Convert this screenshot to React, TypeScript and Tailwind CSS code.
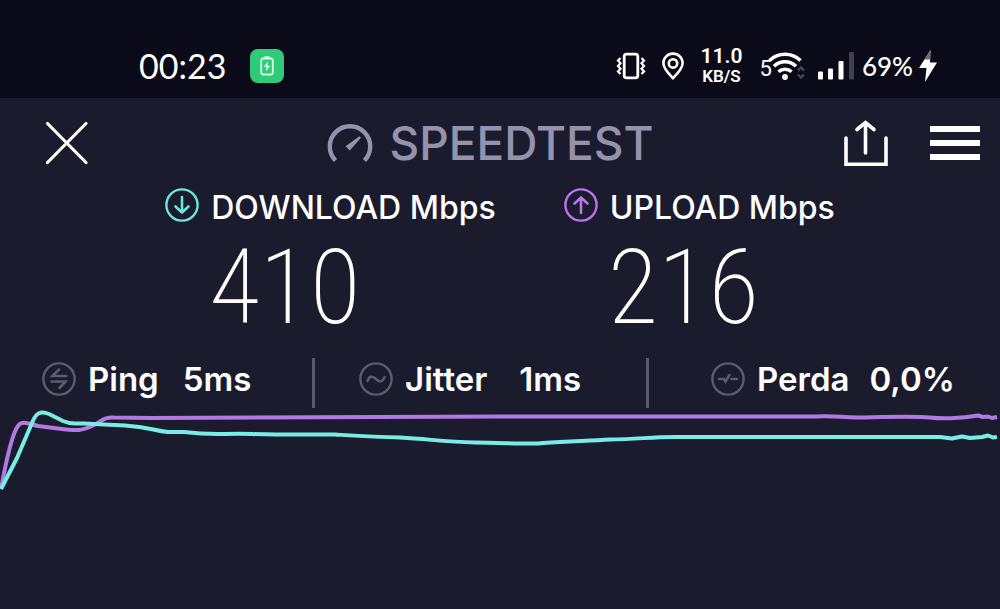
import type { ReactNode } from "react";

const VibrateIcon = () => (
  <svg viewBox="0 0 30 28" className="h-7 w-[30px]" fill="none" stroke="white" aria-hidden="true">
    <rect x="8.2" y="2.2" width="13.6" height="23.6" rx="2.4" strokeWidth="2.8" />
    <path d="M4.500 6 2 8.500l2.500 2.700L2 14l2.500 2.700L2 19.500 4.500 22" strokeWidth="2.200" />
    <path d="M25.500 6 28 8.500l-2.500 2.700L28 14l-2.500 2.700L28 19.500 25.500 22" strokeWidth="2.200" />
  </svg>
);

const PinIcon = () => (
  <svg viewBox="0 0 22 28" className="h-7 w-[22px]" fill="none" stroke="white" strokeWidth="2.6" aria-hidden="true">
    <path d="M11 26.200C6.500 21.500 1.400 16.500 1.400 11.200a9.600 9.600 0 0 1 19.200 0C20.600 16.500 15.500 21.500 11 26.200Z" />
    <circle cx="11" cy="11.400" r="4.200" />
  </svg>
);

const WifiIcon = () => (
  <svg viewBox="0 0 38 30" className="-ml-1 h-[30px] w-[38px]" fill="none" stroke="white" strokeWidth="3.6" aria-hidden="true">
    <path d="M1.500 9.500a22.500 22.500 0 0 1 31 0" />
    <path d="M6 15.200a16 16 0 0 1 22 0" />
    <path d="M10.500 20.800a9.500 9.500 0 0 1 13 0" />
    <circle cx="17" cy="26" r="2.900" fill="white" stroke="none" />
    <path d="m30 19.500 3-3 3 3M30 23.500l3 3 3-3" stroke="#45455a" strokeWidth="2.400" />
  </svg>
);

const SignalIcon = () => (
  <svg viewBox="0 0 36 28" className="h-7 w-9" fill="white" aria-hidden="true">
    <rect x="0" y="19.500" width="5" height="8" rx="1" />
    <rect x="10" y="16.500" width="5" height="11" rx="1" />
    <rect x="20.500" y="9" width="5" height="18.500" rx="1" />
    <rect x="31" y="0" width="5" height="27.500" rx="1" fill="#404054" />
  </svg>
);

const BoltIcon = () => (
  <svg viewBox="0 0 18 32" className="h-8 w-[18px]" aria-hidden="true">
    <path d="M11.500 0 0 18h7.500L6 32 18 12.500h-7Z" fill="white" />
    <path d="M11.500 0 5.500 9.500h5.300Z" fill="#6b6b7c" />
  </svg>
);

const StatusBar = () => (
  <div className="flex h-[98px] items-end justify-between bg-[#0a0a19] pr-[63px] pb-3 pl-[139px]">
    <div className="flex h-10 items-center gap-6">
      <span className="font-['Lato',sans-serif] text-[34px] leading-10">00:23</span>
      <span className="flex h-[34px] w-[34px] items-center justify-center rounded-lg bg-[#2fcb7b]">
        <svg viewBox="0 0 14 20" className="h-5 w-3.5" fill="none" stroke="#d5f9e6" aria-hidden="true">
          <rect x="1.200" y="2.500" width="11.600" height="16" rx="2" strokeWidth="1.800" />
          <path d="M4.500 1.200h5" strokeWidth="1.800" />
          <path d="M7.600 5.500 3.800 11h2.600L6 15.500 10.200 9.800H7.600Z" fill="#d5f9e6" stroke="none" />
        </svg>
      </span>
    </div>
    <div className="flex h-10 items-center">
      <VibrateIcon />
      <div className="ml-4">
        <PinIcon />
      </div>
      <div className="ml-[18px] flex w-10 flex-col items-center font-['Roboto',sans-serif] font-semibold">
        <span className="text-[21px] leading-5">11.0</span>
        <span className="text-[17px] leading-5">KB/S</span>
      </div>
      <div className="ml-[18px] flex items-end">
        <span className="font-['Roboto',sans-serif] text-[22px] leading-6">5</span>
        <WifiIcon />
      </div>
      <div className="ml-3">
        <SignalIcon />
      </div>
      <span className="ml-2 font-['Lato',sans-serif] text-[26px] leading-8 font-medium">69%</span>
      <div className="ml-1.5">
        <BoltIcon />
      </div>
    </div>
  </div>
);

const Header = () => (
  <header className="flex h-[90px] items-center justify-between pr-5 pl-[45px]">
    <button type="button" aria-label="Close" className="w-[92px]">
      <svg viewBox="0 0 44 44" className="h-11 w-11" stroke="white" strokeWidth="3.200" strokeLinecap="round">
        <path d="M2.500 2.500 41 41.500M41 2.500 2.500 41.500" />
      </svg>
    </button>
    <h1 className="flex items-center gap-4 text-[46px] leading-[48px] font-medium text-[#9493ab]">
      <svg viewBox="0 0 46 40" className="h-10 w-[46px]" fill="none" aria-hidden="true">
        <path d="M8.500 37.500A20.200 20.200 0 1 1 37.500 37.500" stroke="#9493ab" strokeWidth="4.400" />
        <path d="m32.500 13.200 1.500 1.600-11.200 12.700-4.300-4.200Z" fill="#9493ab" />
      </svg>
      SPEEDTEST
    </h1>
    <div className="flex items-center gap-[42px]">
      <button type="button" aria-label="Share">
        <svg viewBox="0 0 44 46" className="h-[46px] w-11" fill="none" stroke="white" strokeWidth="3.600" strokeLinecap="round">
          <path d="M2 18v26.200h40V18" />
          <path d="M21.500 33V2.500M13 9.500l8.500-7 8.500 7" />
        </svg>
      </button>
      <button type="button" aria-label="Menu" className="flex flex-col gap-2">
        <span className="h-1.5 w-[50px] bg-white" />
        <span className="h-1.5 w-[50px] bg-white" />
        <span className="h-1.5 w-[50px] bg-white" />
      </button>
    </div>
  </header>
);

interface CircleIconProps {
  color: string;
  children: ReactNode;
}

const CircleIcon = ({ color, children }: CircleIconProps) => (
  <svg
    viewBox="0 0 34 34"
    className="h-[34px] w-[34px] shrink-0"
    fill="none"
    stroke={color}
    strokeWidth="2.600"
    strokeLinecap="round"
    aria-hidden="true"
  >
    <circle cx="17" cy="17" r="15.600" strokeWidth="2.400" />
    {children}
  </svg>
);

interface SpeedProps {
  label: string;
  value: string;
  icon: ReactNode;
}

const Speed = ({ label, value, icon }: SpeedProps) => (
  <section>
    <h2 className="flex items-start gap-3 text-[32px] leading-10 font-medium whitespace-nowrap">
      {icon}
      {label}
    </h2>
    <p className="pl-11 font-['Roboto_Condensed','Roboto',sans-serif] text-[104px] leading-[120px] font-extralight">
      {value}
    </p>
  </section>
);

const results = [
  {
    label: "Ping",
    value: "5ms",
    cell: "pl-[42px]",
    gap: "gap-6",
    icon: <path d="M24.500 14H10.500l6.500-6.500M9.500 19.500h14L17.500 26" />,
  },
  {
    label: "Jitter",
    value: "1ms",
    cell: "border-l-[3px] pl-11",
    gap: "gap-8",
    icon: <path d="M8.500 19c1.500-5 5-5.500 8.500-2s7 3 8.500-2" />,
  },
  {
    label: "Perda",
    value: "0,0%",
    cell: "border-l-[3px] pl-[62px]",
    gap: "gap-5",
    icon: <path d="M8 17h5l1.500 2.500 4-6.500M20.500 17H26" />,
  },
];

const Chart = () => (
  <svg viewBox="0 0 1000 90" className="block w-full" fill="none" strokeWidth="4" strokeLinejoin="round" role="img" aria-label="Speed history">
    <path
      stroke="#b278e4"
      d="M1 81C5 59 11 27 18 18 22 12 29 16 38 18L58 20.500C78 23 82 23 94 17 103 12 105 9 114 9.500L150 10C220 9 350 8.500 500 8.500H815C836 7 842 10 860 9.500 885 9 915 8 930 9.500 950 12 966 9 978 7.500L983 9 988 8.500 992 10 997 9"
    />
    <path
      stroke="#79ece4"
      d="M1 81 17 50 32 15C36 4 41 3 49 6L63 13C72 17 73 15 84 15.500L125 17.500C150 19 154 23 168 24L184 24C200 26 207 26.500 225 26 247 25 250 26.500 276 26.500H335C360 28 375 29 400 29.500 430 31 443 34 475 34.500 510 35 535 36.500 543 35 570 33 590 33 610 31.500 640 31 650 29 675 29H940L952 30.500 962 28.500 970 30 982 29 988 27.500 993 29.500 997 29"
    />
  </svg>
);

const App = () => {
  return (
    <main className="min-h-screen bg-[#1b1b2e] font-['Inter',sans-serif] text-white">
      <StatusBar />
      <Header />
      <div className="flex justify-center gap-[68px]">
        <Speed
          label="DOWNLOAD Mbps"
          value="410"
          icon={
            <CircleIcon color="#6fe5df">
              <path d="M17 9v15.500M10.500 18.500 17 24.500l6.500-6" />
            </CircleIcon>
          }
        />
        <Speed
          label="UPLOAD Mbps"
          value="216"
          icon={
            <CircleIcon color="#bd73ea">
              <path d="M17 25V9.500M10.500 15.500 17 9.500l6.500 6" />
            </CircleIcon>
          }
        />
      </div>
      <dl className="mt-2.5 grid grid-cols-[312fr_334fr_354fr]">
        {results.map((item) => (
          <div key={item.label} className={`flex h-[50px] items-center border-[#5a5a6d] pb-2 ${item.cell}`}>
            <CircleIcon color="#5c5b70">{item.icon}</CircleIcon>
            <div className={`ml-3 flex text-[33px] leading-9 font-semibold whitespace-nowrap ${item.gap}`}>
              <dt>{item.label}</dt>
              <dd>{item.value}</dd>
            </div>
          </div>
        ))}
      </dl>
      <Chart />
    </main>
  );
};

export default App;
